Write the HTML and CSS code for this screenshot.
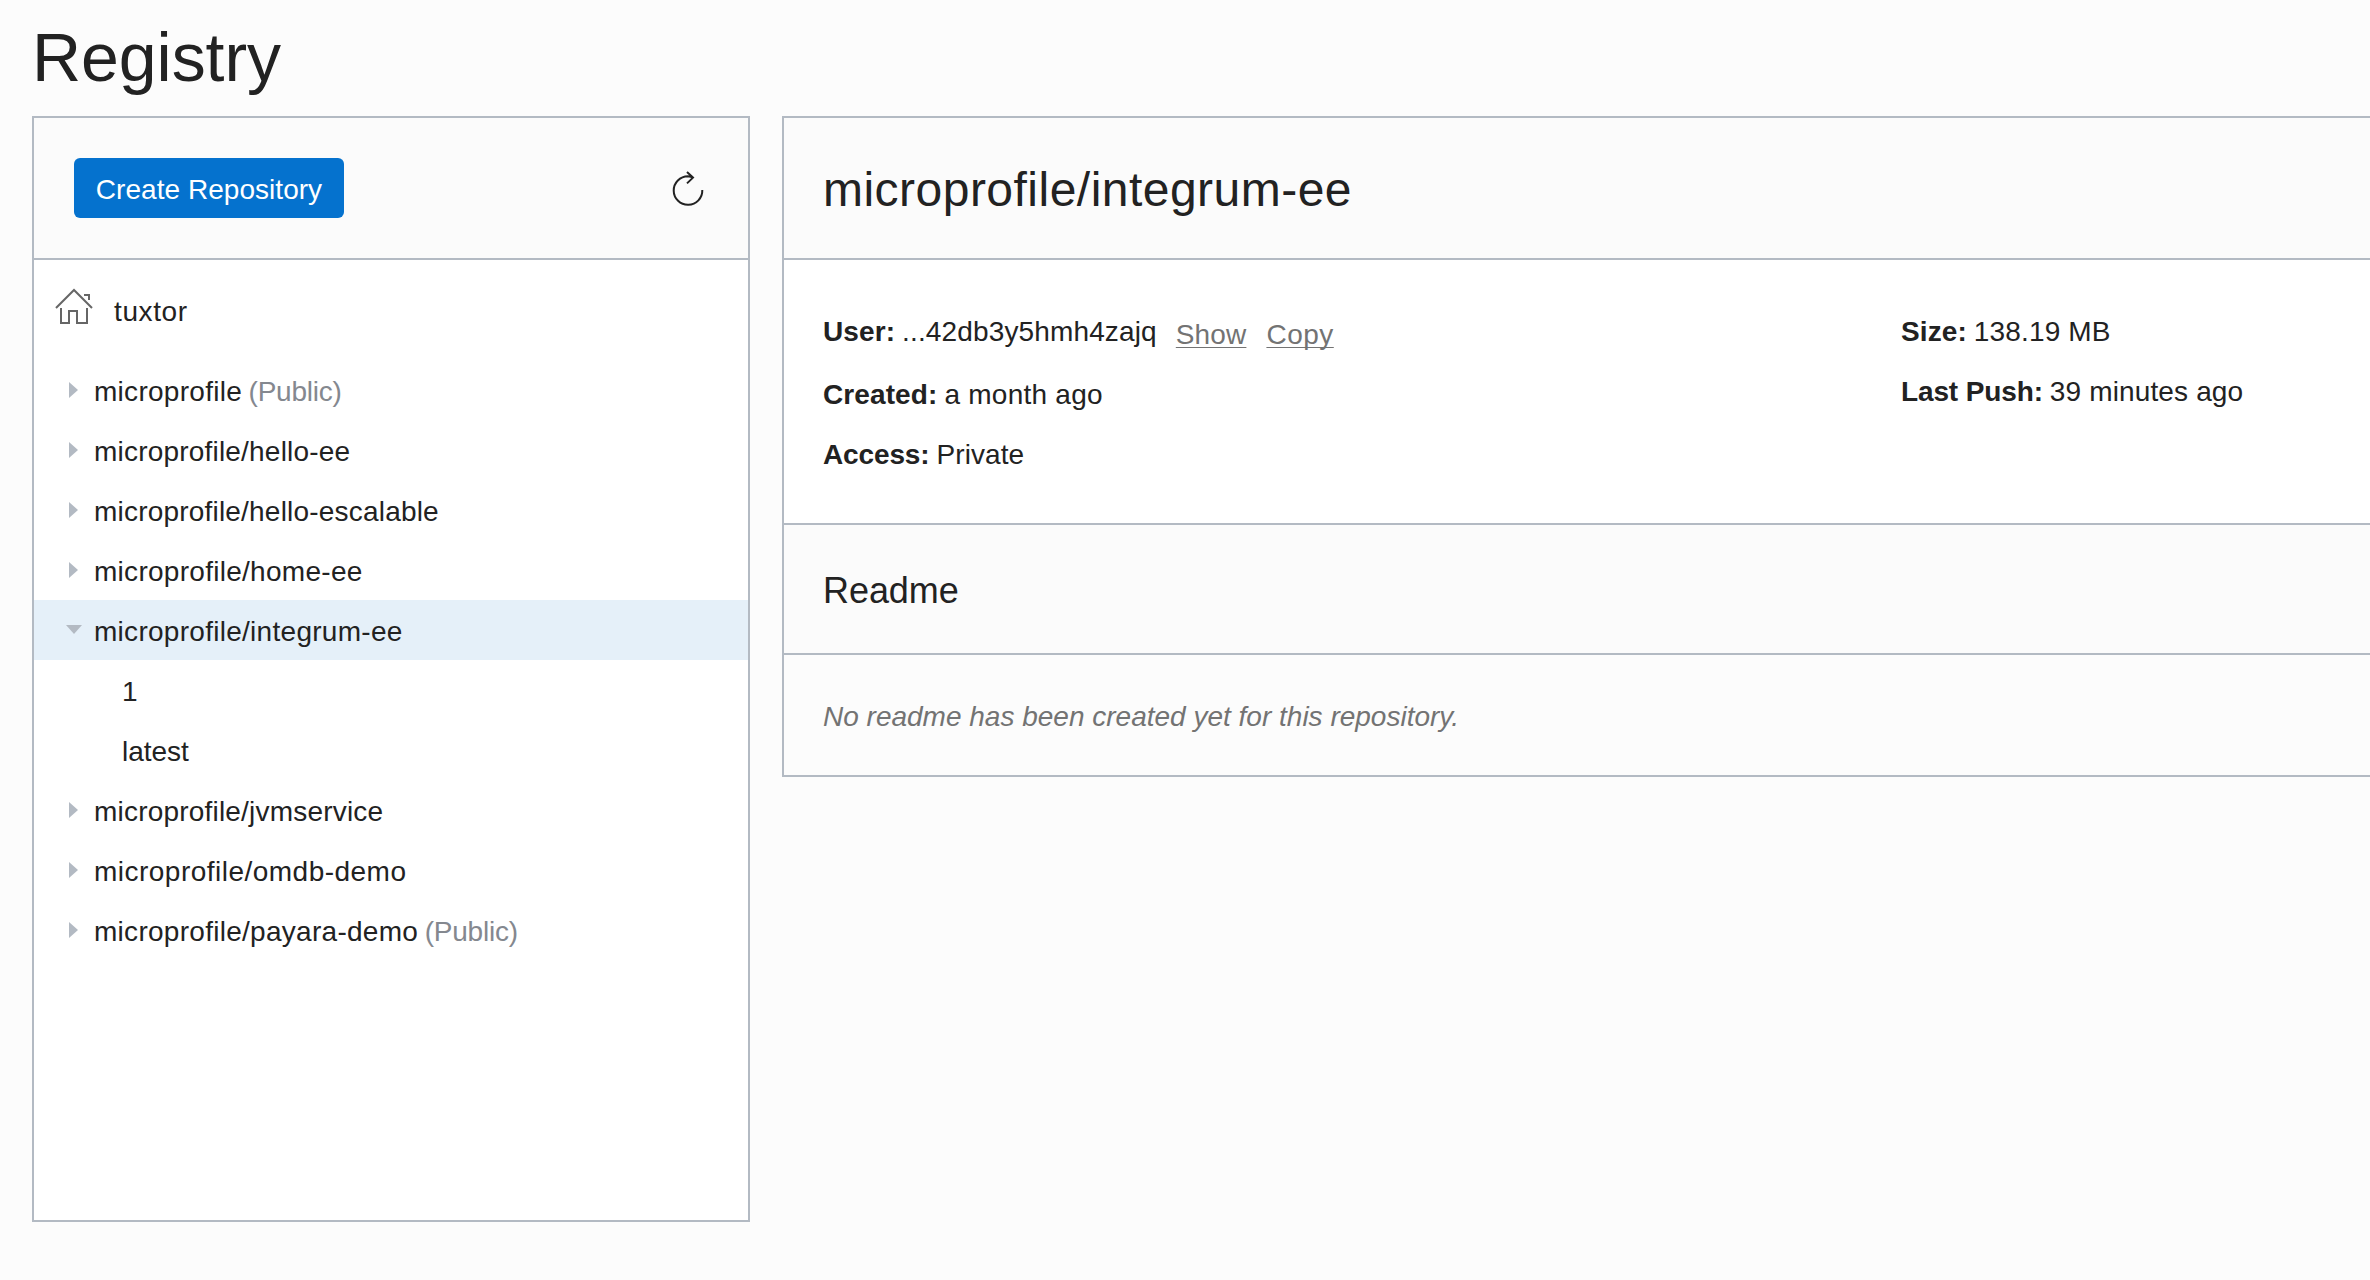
FILE: index.html
```html
<!DOCTYPE html>
<html lang="en">
<head>
<meta charset="utf-8">
<title>Registry</title>
<link rel="stylesheet" href="styles.css">
</head>
<body>
<h1 class="page-title">Registry</h1>
<main class="columns">
  <aside class="panel sidebar">
    <div class="toolbar">
      <button class="create">Create Repository</button>
      <svg class="refresh" width="32" height="38" viewBox="0 0 32 38" fill="none" stroke="#222" stroke-width="2">
        <path d="M30.3 21A14.3 14.3 0 1 1 16 7.2L21 8.2M15 3L21 8.6L15 14.4"/>
      </svg>
    </div>
    <div class="root">
      <svg class="home" width="38" height="38" viewBox="0 0 38 38" fill="none" stroke="#666" stroke-width="2">
        <path d="M1 20L19 2L37 20"/>
        <path d="M6 20V35H14V23H22V35H32V20"/>
        <path d="M29 7H34V12"/>
      </svg>
      <span class="root-name">tuxtor</span>
    </div>
    <ul class="tree">
      <li class="node"><i class="caret"></i><span>microprofile</span><span class="public">(Public)</span></li>
      <li class="node"><i class="caret"></i><span class="narrow">microprofile/hello-ee</span></li>
      <li class="node"><i class="caret"></i><span class="narrow">microprofile/hello-escalable</span></li>
      <li class="node"><i class="caret"></i><span>microprofile/home-ee</span></li>
      <li class="node selected"><i class="caret open"></i><span>microprofile/integrum-ee</span></li>
      <li class="node tag">1</li>
      <li class="node tag">latest</li>
      <li class="node"><i class="caret"></i><span class="narrow">microprofile/jvmservice</span></li>
      <li class="node"><i class="caret"></i><span class="wide">microprofile/omdb-demo</span></li>
      <li class="node"><i class="caret"></i><span>microprofile/payara-demo</span><span class="public">(Public)</span></li>
    </ul>
  </aside>
  <section class="panel details">
    <h2 class="repo-name">microprofile/integrum-ee</h2>
    <div class="info">
      <div class="fields">
        <div class="field user"><b>User:</b><span>...42db3y5hmh4zajq</span><a class="link show">Show</a><a class="link copy">Copy</a></div>
        <div class="field"><b>Created:</b><span class="month">a month ago</span></div>
        <div class="field"><b class="tight">Access:</b><span class="plain">Private</span></div>
      </div>
      <div class="fields">
        <div class="field"><b>Size:</b><span>138.19 MB</span></div>
        <div class="field"><b class="tight">Last Push:</b><span>39 minutes ago</span></div>
      </div>
    </div>
    <h3 class="readme-title">Readme</h3>
    <p class="readme-empty">No readme has been created yet for this repository.</p>
  </section>
</main>
</body>
</html>
```
FILE: styles.css
```css
* { box-sizing: border-box; }

body {
  margin: 0;
  height: 1280px;
  overflow: hidden;
  background: #fcfcfc;
  color: #222;
  font: 28px/57px "Liberation Sans", Arial, sans-serif;
  white-space: nowrap;
}

h1, h2, h3, p, ul { margin: 0; font-weight: 400; }

.page-title {
  padding: 19px 0 21px 32px;
  font-size: 68px;
  line-height: 76px;
  letter-spacing: -0.05px;
}

.columns {
  display: flex;
  align-items: flex-start;
  gap: 32px;
  padding-left: 32px;
}

.panel { border: 2px solid #b3bac3; }

/* Repository list */
.sidebar {
  flex: none;
  width: 718px;
  height: 1106px;
  background: #fff;
}

.toolbar {
  display: flex;
  align-items: center;
  justify-content: space-between;
  height: 142px;
  padding: 0 44px 0 40px;
  background: #fbfbfb;
  border-bottom: 2px solid #b3bac3;
}

.create {
  width: 270px;
  height: 60px;
  padding: 3px 0 0;
  border: 0;
  border-radius: 6px;
  background: #0572ce;
  color: #fff;
  font: inherit;
  letter-spacing: 0.04px;
}

.refresh { flex: none; }

.root {
  display: flex;
  align-items: flex-start;
  gap: 21px;
  height: 100px;
  padding: 23px 0 0 21px;
}

.home { margin-top: 5px; }
.root-name { letter-spacing: 0.6px; }

.tree { padding: 0; list-style: none; }

.node {
  display: flex;
  height: 60px;
  padding: 3px 0 0 35px;
  letter-spacing: 0.28px;
}

.node.selected { background: #e5f0f9; }
.node.tag { padding-left: 88px; letter-spacing: -0.05px; }
.wide { letter-spacing: 0.48px; }
.narrow { letter-spacing: 0.2px; }

.public {
  margin-left: 6.5px;
  color: #84888f;
  letter-spacing: -0.23px;
}

.caret {
  flex: none;
  width: 9px;
  height: 16px;
  margin: 19px 16px 0 0;
  background: #b3bac3;
  clip-path: polygon(0 0, 100% 50%, 0 100%);
}

.caret.open {
  width: 16px;
  height: 9px;
  margin: 22px 12px 0 -3px;
  clip-path: polygon(0 0, 100% 0, 50% 100%);
}

/* Repository details */
.details {
  flex: 1;
  border-right: 0;
}

.repo-name {
  height: 142px;
  padding: 45px 0 0 39px;
  background: #fbfbfb;
  border-bottom: 2px solid #b3bac3;
  font-size: 48px;
  line-height: 53px;
  letter-spacing: 0.48px;
}

.info {
  display: grid;
  grid-template-columns: 1078px 1fr;
  height: 265px;
  padding: 40px 0 0 39px;
  background: #fff;
  border-bottom: 2px solid #b3bac3;
}

.field {
  display: flex;
  height: 60px;
  padding-top: 3px;
  letter-spacing: 0.14px;
}

.field.user { height: 63px; }
.field b { margin-right: 7px; letter-spacing: 0.1px; }
.field b.tight { letter-spacing: -0.13px; }
.month { letter-spacing: 0.25px; }
.plain { letter-spacing: 0.07px; }

.link {
  padding-top: 3px;
  color: #737373;
  text-decoration: underline 1px;
  text-underline-offset: 3px;
  text-decoration-skip-ink: none;
}

.show { margin-left: 19px; }
.copy { margin-left: 20px; letter-spacing: 0.5px; }

.readme-title {
  height: 130px;
  padding: 45px 0 0 39px;
  background: #fbfbfb;
  border-bottom: 2px solid #b3bac3;
  font-size: 36px;
  line-height: 41px;
  letter-spacing: -0.07px;
}

.readme-empty {
  height: 120px;
  padding: 46px 0 0 39px;
  color: #737373;
  font-style: italic;
  line-height: 31px;
}
```
